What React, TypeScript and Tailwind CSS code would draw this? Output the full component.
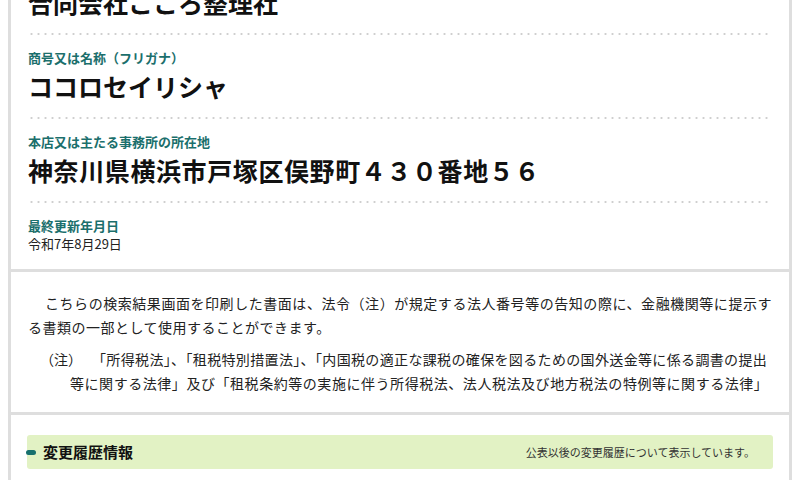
import React from 'react';

const font = { fontFamily: '"Noto Sans CJK JP", "Noto Sans", sans-serif' };

interface FieldProps {
  label: string;
  value: string;
  small?: boolean;
  last?: boolean;
  wide?: boolean;
}

const Dots = () => (
  <div className="h-[2px] w-full bg-[radial-gradient(circle,#cfcfcf_1px,transparent_1.2px)] bg-[length:7px_2px]" />
);

const Field: React.FC<FieldProps> = ({ label, value, small, last, wide }) => (
  <>
    <div className={`pt-[14px] ${last ? 'pb-[16px]' : 'pb-[14px]'}`}>
      <div className="text-[13px] leading-[18px] font-bold text-[#1b6f6c]">{label}</div>
      {small ? (
        <div className="text-[13px] leading-[18px] text-[#222]">{value}</div>
      ) : (
        <div className={`mt-[2px] text-[25px] leading-[34px] font-bold text-[#111] ${wide ? 'tracking-[0.6px]' : ''}`}>
          {value}
        </div>
      )}
    </div>
    {!last && <Dots />}
  </>
);

export default function App() {
  return (
    <div className="h-[480px] w-[800px] overflow-hidden bg-white" style={font}>
      <div className="mx-[8px] border-x-[3px] border-[#dedede] min-h-[620px] -mt-[49px]">
        {/* Basic info */}
        <div className="px-[17px]">
          <Field label="商号又は名称" value="合同会社こころ整理社" />
          <Field label="商号又は名称（フリガナ）" value="ココロセイリシャ" />
          <Field label="本店又は主たる事務所の所在地" value="神奈川県横浜市戸塚区俣野町４３０番地５６" wide />
          <Field label="最終更新年月日" value="令和7年8月29日" small last />
        </div>

        <div className="h-[3px] bg-[#dedede]" />

        {/* Notice */}
        <div className="px-[17px] pt-[19px] pb-[17px] text-[14px] leading-[24px] text-[#222]">
          <p className="indent-[17px] tracking-[0.5px] text-justify">
            こちらの検索結果画面を印刷した書面は、法令（注）が規定する法人番号等の告知の際に、金融機関等に提示する書類の一部として使用することができます。
          </p>
          <p className="mt-[8px] pl-[42px] -indent-[22px]">
            <span className="inline-block w-[52px] -ml-[8px] indent-0">（注）</span>
            <span className="whitespace-nowrap tracking-[0.35px]">
              「所得税法」、「租税特別措置法」、「内国税の適正な課税の確保を図るための国外送金等に係る調書の提出
            </span>
            <br />
            <span className="tracking-[0.55px]">
              等に関する法律」及び「租税条約等の実施に伴う所得税法、法人税法及び地方税法の特例等に関する法律」
            </span>
          </p>
        </div>

        <div className="h-[3px] bg-[#dedede]" />

        {/* Change history */}
        <div className="px-[16px] pt-[20px]">
          <div className="h-[34px] rounded-[3px] bg-[#e2f2c4] flex items-center justify-between pr-[18px]">
            <div className="flex items-center">
              <span className="-ml-px w-[10px] h-[5px] rounded-full bg-[#17706d]" />
              <span className="ml-[7px] text-[15px] font-bold text-[#111]">変更履歴情報</span>
            </div>
            <span className="text-[11px] text-[#333]">公表以後の変更履歴について表示しています。</span>
          </div>
        </div>
      </div>
    </div>
  );
}
